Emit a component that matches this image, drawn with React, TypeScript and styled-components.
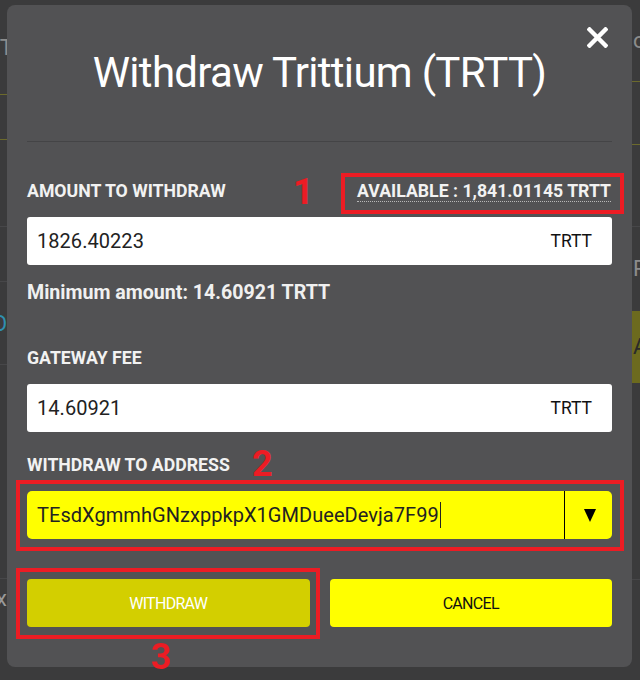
import React from "react";
import styled, { createGlobalStyle } from "styled-components";

const Global = createGlobalStyle`
  html, body { margin: 0; padding: 0; background: #3b3b3c; }
  body { font-family: Roboto, "Liberation Sans", sans-serif; }
  * { box-sizing: border-box; }
`;

const RED = "#ec1c24";

/* ---------- background page (mostly hidden by the dialog) ---------- */
const Page = styled.div`
  width: 640px;
  height: 680px;
  overflow: hidden;
  display: grid;
  grid-template-columns: 320px 320px;
  background: #3b3b3c;
`;

const BgColumn = styled.div`
  display: flex;
  flex-direction: column;
`;

const BgRow = styled.div<{ $h: number; $line?: string; $fill?: string; $pad?: number }>`
  height: ${(p) => p.$h}px;
  flex: none;
  border-bottom: 1px solid ${(p) => p.$line ?? "transparent"};
  background: ${(p) => p.$fill ?? "transparent"};
  display: flex;
  align-items: center;
  padding-left: ${(p) => p.$pad ?? 0}px;
  font-size: 22px;
  color: #8c8c8c;
  white-space: nowrap;
`;

const BgText = styled.span<{ $color?: string; $shift?: number }>`
  color: ${(p) => p.$color ?? "#8c8c8c"};
  margin-left: ${(p) => p.$shift ?? 0}px;
`;

/* ---------- dialog ---------- */
const Dialog = styled.div`
  position: fixed;
  top: 5px;
  left: 7px;
  width: 625px;
  background: #525254;
  border-radius: 8px;
  padding: 22px 20px 40px;
  color: #fff;
  font-family: Roboto, "Liberation Sans", sans-serif;
`;

const Header = styled.div`
  display: grid;
  grid-template-columns: 1fr auto 1fr;
  align-items: start;
`;

const Title = styled.h1`
  grid-column: 2;
  margin: 21px 0 0;
  font-size: 42px;
  font-weight: 400;
  line-height: 50px;
  letter-spacing: -0.7px;
  white-space: nowrap;
  color: #ffffff;
`;

const CloseButton = styled.button`
  grid-column: 3;
  justify-self: end;
  margin-right: 4px;
  width: 21px;
  height: 21px;
  padding: 0;
  border: none;
  background: none;
  display: flex;
  cursor: pointer;
`;

const Divider = styled.hr`
  margin: 43px 0 0;
  height: 1px;
  border: none;
  background: #444446;
`;

const LabelRow = styled.div<{ $gap: number }>`
  position: relative;
  margin-top: ${(p) => p.$gap}px;
  height: 20px;
  display: flex;
  justify-content: space-between;
  align-items: flex-start;
`;

const Label = styled.span`
  font-size: 17.7px;
  font-weight: 700;
  line-height: 20px;
  color: #f2f2f2;
`;

const Available = styled.span`
  position: relative;
  display: inline-block;
  font-size: 17.7px;
  font-weight: 700;
  line-height: 20px;
  color: #f2f2f2;
  margin-right: 1px;

  &::after {
    content: "";
    position: absolute;
    inset: -8px -13px -13px -16px;
    border: 4px solid ${RED};
    pointer-events: none;
  }
`;

const Dotted = styled.span`
  border-bottom: 1px dotted #b8b8b8;
`;

const Marker = styled.span<{ $left: number; $top: number }>`
  position: absolute;
  left: ${(p) => p.$left}px;
  top: ${(p) => p.$top}px;
  font-family: Roboto, "Liberation Sans", sans-serif;
  font-size: 36px;
  font-weight: 700;
  line-height: 36px;
  color: ${RED};
  pointer-events: none;
`;

const Field = styled.div<{ $yellow?: boolean; $marked?: boolean }>`
  position: relative;
  margin-top: 16px;
  height: 48px;
  display: flex;
  align-items: center;
  background: ${(p) => (p.$yellow ? "#ffff00" : "#ffffff")};
  border-radius: ${(p) => (p.$yellow ? 5 : 3)}px;
  color: #222;

  ${(p) =>
    p.$marked &&
    `
    &::after {
      content: "";
      position: absolute;
      inset: -11px -12px -12px -11px;
      border: 4px solid ${RED};
      pointer-events: none;
    }
  `}
`;

const Value = styled.span`
  flex: 1;
  display: flex;
  align-items: center;
  padding-left: 10px;
  font-size: 20px;
  letter-spacing: 0.05px;
  color: #222222;
  white-space: nowrap;
`;

const Caret = styled.span`
  display: inline-block;
  width: 1px;
  height: 26px;
  margin-left: 1px;
  background: #222;
`;

const Unit = styled.span`
  padding-right: 20px;
  font-size: 17.5px;
  color: #111;
`;

const Toggle = styled.span`
  align-self: stretch;
  width: 48px;
  border-left: 1px solid #000;
  display: flex;
  align-items: center;
  justify-content: center;
  padding-left: 2px;
`;

const Hint = styled.p`
  margin: 17px 0 0;
  font-size: 19.6px;
  font-weight: 700;
  line-height: 22px;
  color: #f0f0f0;
`;

const Actions = styled.div`
  position: relative;
  margin-top: 40px;
  display: grid;
  grid-template-columns: 1fr 1fr;
  gap: 20px;
`;

const ActionButton = styled.button<{ $primary?: boolean }>`
  position: relative;
  height: 48px;
  border: none;
  border-radius: 4px;
  background: ${(p) => (p.$primary ? "#d3cf00" : "#ffff00")};
  color: ${(p) => (p.$primary ? "#ffffff" : "#111111")};
  font-family: Roboto, "Liberation Sans", sans-serif;
  font-size: 16px;
  letter-spacing: -0.7px;
  cursor: pointer;

  ${(p) =>
    p.$primary &&
    `
    &::after {
      content: "";
      position: absolute;
      inset: -11px -10px -12px -11px;
      border: 4px solid ${RED};
      pointer-events: none;
    }
  `}
`;

const CloseIcon = () => (
  <svg width="21" height="21" viewBox="0 0 21 21">
    <path d="M2.5 2.5 L18.5 18.5 M18.5 2.5 L2.5 18.5" stroke="#fff" strokeWidth="4.4" strokeLinecap="square" />
  </svg>
);

const DownArrow = () => (
  <svg width="12" height="13" viewBox="0 0 12 13">
    <polygon points="0,0 12,0 6,13" fill="#000" />
  </svg>
);

export default function App() {
  return (
    <>
      <Global />
      <Page>
        <BgColumn>
          <BgRow $h={95} $line="#6c6a2c">
            <BgText $shift={-6}>IT</BgText>
          </BgRow>
          <BgRow $h={45} $line="#6c6a2c" />
          <BgRow $h={87} $line="#474749" />
          <BgRow $h={55} $line="#474749" />
          <BgRow $h={83} $line="#474749">
            <BgText $color="#2f8fb0" $shift={-8}>O</BgText>
          </BgRow>
          <BgRow $h={214} $line="#474749" />
          <BgRow $h={40}>
            <BgText $color="#9a9a9a" $shift={-4}>x</BgText>
          </BgRow>
        </BgColumn>
        <BgColumn>
          <BgRow $h={82} $line="#6c6a2c" $pad={313}>
            <BgText>o</BgText>
          </BgRow>
          <BgRow $h={63} $line="#6c6a2c" />
          <BgRow $h={82} $line="#474749" />
          <BgRow $h={84} $pad={313}>
            <BgText>RA</BgText>
          </BgRow>
          <BgRow $h={72} $fill="#6c6a1e" $pad={313}>
            <BgText $color="#2a2a2a">A</BgText>
          </BgRow>
          <BgRow $h={197} $line="#474749" />
        </BgColumn>
      </Page>

      <Dialog role="dialog" aria-label="Withdraw Trittium (TRTT)">
        <Header>
          <Title>Withdraw Trittium (TRTT)</Title>
          <CloseButton aria-label="Close">
            <CloseIcon />
          </CloseButton>
        </Header>
        <Divider />

        <LabelRow $gap={39}>
          <Label>AMOUNT TO WITHDRAW</Label>
          <Marker $left={266} $top={-7}>1</Marker>
          <Available>
            <Dotted>AVAILABLE : 1,841.01145 TRTT</Dotted>
          </Available>
        </LabelRow>
        <Field>
          <Value>1826.40223</Value>
          <Unit>TRTT</Unit>
        </Field>
        <Hint>Minimum amount: 14.60921 TRTT</Hint>

        <LabelRow $gap={44}>
          <Label>GATEWAY FEE</Label>
        </LabelRow>
        <Field>
          <Value>14.60921</Value>
          <Unit>TRTT</Unit>
        </Field>

        <LabelRow $gap={23}>
          <Label>WITHDRAW TO ADDRESS</Label>
          <Marker $left={225} $top={-9}>2</Marker>
        </LabelRow>
        <Field $yellow $marked>
          <Value>
            TEsdXgmmhGNzxppkpX1GMDueeDevja7F99
            <Caret />
          </Value>
          <Toggle>
            <DownArrow />
          </Toggle>
        </Field>

        <Actions>
          <ActionButton $primary>WITHDRAW</ActionButton>
          <ActionButton>CANCEL</ActionButton>
          <Marker $left={124} $top={60}>3</Marker>
        </Actions>
      </Dialog>
    </>
  );
}
